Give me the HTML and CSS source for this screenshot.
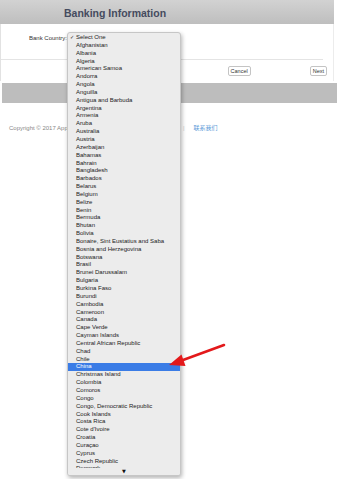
FILE: index.html
```html
<!DOCTYPE html>
<html lang="zh-CN">
<head>
    <meta charset="UTF-8">
    <title>Banking Information</title>
    <meta name="viewport" content="width=device-width, initial-scale=1.0">
    <link rel="stylesheet" href="styles.css">
</head>
<body>
    <div class="panel">
        <div class="panel-head">
            <h1>Banking Information</h1>
        </div>
        <div class="panel-body">
            <div class="field">
                <label>Bank Country:</label>
            </div>
            <div class="actions">
                <button>Cancel</button>
                <button>Next</button>
            </div>
        </div>
        <div class="panel-foot"></div>
    </div>
    <div class="footer">
        <span class="copy">Copyright © 2017 Apple</span>
        <span class="sep">|</span>
        <a class="link">联系我们</a>
    </div>

    <!-- 展开的下拉列表 -->
    <div class="dropdown">
        <ul>
            <li><span class="mark">✓</span>Select One</li>
            <li><span class="mark"></span>Afghanistan</li>
            <li><span class="mark"></span>Albania</li>
            <li><span class="mark"></span>Algeria</li>
            <li><span class="mark"></span>American Samoa</li>
            <li><span class="mark"></span>Andorra</li>
            <li><span class="mark"></span>Angola</li>
            <li><span class="mark"></span>Anguilla</li>
            <li><span class="mark"></span>Antigua and Barbuda</li>
            <li><span class="mark"></span>Argentina</li>
            <li><span class="mark"></span>Armenia</li>
            <li><span class="mark"></span>Aruba</li>
            <li><span class="mark"></span>Australia</li>
            <li><span class="mark"></span>Austria</li>
            <li><span class="mark"></span>Azerbaijan</li>
            <li><span class="mark"></span>Bahamas</li>
            <li><span class="mark"></span>Bahrain</li>
            <li><span class="mark"></span>Bangladesh</li>
            <li><span class="mark"></span>Barbados</li>
            <li><span class="mark"></span>Belarus</li>
            <li><span class="mark"></span>Belgium</li>
            <li><span class="mark"></span>Belize</li>
            <li><span class="mark"></span>Benin</li>
            <li><span class="mark"></span>Bermuda</li>
            <li><span class="mark"></span>Bhutan</li>
            <li><span class="mark"></span>Bolivia</li>
            <li><span class="mark"></span>Bonaire, Sint Eustatius and Saba</li>
            <li><span class="mark"></span>Bosnia and Herzegovina</li>
            <li><span class="mark"></span>Botswana</li>
            <li><span class="mark"></span>Brasil</li>
            <li><span class="mark"></span>Brunei Darussalam</li>
            <li><span class="mark"></span>Bulgaria</li>
            <li><span class="mark"></span>Burkina Faso</li>
            <li><span class="mark"></span>Burundi</li>
            <li><span class="mark"></span>Cambodia</li>
            <li><span class="mark"></span>Cameroon</li>
            <li><span class="mark"></span>Canada</li>
            <li><span class="mark"></span>Cape Verde</li>
            <li><span class="mark"></span>Cayman Islands</li>
            <li><span class="mark"></span>Central African Republic</li>
            <li><span class="mark"></span>Chad</li>
            <li><span class="mark"></span>Chile</li>
            <li class="active"><span class="mark"></span>China</li>
            <li><span class="mark"></span>Christmas Island</li>
            <li><span class="mark"></span>Colombia</li>
            <li><span class="mark"></span>Comoros</li>
            <li><span class="mark"></span>Congo</li>
            <li><span class="mark"></span>Congo, Democratic Republic</li>
            <li><span class="mark"></span>Cook Islands</li>
            <li><span class="mark"></span>Costa Rica</li>
            <li><span class="mark"></span>Cote d'Ivoire</li>
            <li><span class="mark"></span>Croatia</li>
            <li><span class="mark"></span>Curaçao</li>
            <li><span class="mark"></span>Cyprus</li>
            <li><span class="mark"></span>Czech Republic</li>
            <li><span class="mark"></span>Denmark</li>
        </ul>
        <div class="more">▼</div>
    </div>

    <!-- 红色标注箭头 -->
    <svg class="pointer" width="70" height="40" viewBox="0 0 70 40">
        <line x1="64" y1="9" x2="21" y2="24.8" stroke="#e3191b" stroke-width="2.6" stroke-linecap="round"/>
        <polygon points="9,29 25.5,30 21.5,18.5" fill="#e3191b"/>
    </svg>
</body>
</html>
```

FILE: styles.css
```css
body {
    margin: 0;
    background-color: #fff;
    font-family: "Liberation Sans", Arial, sans-serif;
    position: relative;
    min-height: 479px;
}
.panel {
    width: 337px;
}
.panel-head {
    height: 24px;
    background: linear-gradient(#d2d2d2, #bebebe);
    margin-right: 3px;
}
.panel-head h1 {
    margin: 0;
    padding: 7px 0 0 64px;
    font-size: 10.5px;
    line-height: 13px;
    color: #454b5e;
}
.panel-body {
    background-color: #fff;
    border-left: 1px solid #e2e2e2;
    border-right: 1px solid #ececec;
    margin-right: 3px;
}
.field {
    height: 36px;
    border-bottom: 1px solid #e4e4e4;
    margin-right: 10px;
    padding-top: 10px;
    box-sizing: border-box;
}
.field label {
    display: block;
    width: 66px;
    text-align: right;
    font-size: 6px;
    line-height: 8px;
    color: #333;
}
.actions {
    display: flex;
    justify-content: flex-end;
    gap: 59px;
    height: 21px;
    padding: 6px 6px 0 0;
    box-sizing: border-box;
}
.actions button {
    height: 10px;
    padding: 0 2px;
    font-family: "Liberation Sans", Arial, sans-serif;
    font-size: 5.5px;
    line-height: 8px;
    color: #333;
    background-color: #fff;
    border: 1px solid #c4c4c4;
    border-radius: 2px;
}
.panel-foot {
    height: 20px;
    margin: 2px 0 0 2px;
    background-color: #bdbdbd;
}
.footer {
    display: flex;
    align-items: center;
    margin-top: 21px;
    padding-left: 9px;
    font-size: 6px;
    line-height: 8px;
    color: #888;
}
.footer .copy {
    width: 172px;
    white-space: nowrap;
}
.footer .sep {
    color: #ccc;
    margin: 0 9px 0 2px;
}
.footer .link {
    color: #5a9ad8;
    font-family: "Liberation Sans", "Noto Sans CJK SC", sans-serif;
}
.dropdown {
    position: absolute;
    left: 67px;
    top: 32px;
    width: 112px;
    height: 442px;
    background-color: #ececec;
    border: 1px solid #c6c6c6;
    border-radius: 3px;
    box-shadow: 1px 2px 4px rgba(0, 0, 0, 0.3);
    overflow: hidden;
}
.dropdown ul {
    list-style: none;
    margin: 0;
    padding: 1px 0 0 0;
}
.dropdown li {
    display: flex;
    height: 7.85px;
    line-height: 7.85px;
    padding-left: 2px;
    font-size: 6px;
    color: #222;
    white-space: nowrap;
}
.dropdown li.active {
    background-color: #3a7ce6;
    color: #fff;
}
.dropdown .mark {
    width: 6px;
    font-family: "DejaVu Sans", sans-serif;
    font-size: 5px;
}
.dropdown .more {
    position: absolute;
    left: 0;
    right: 0;
    bottom: 0;
    height: 7px;
    background-color: #ececec;
    text-align: center;
    font-family: "DejaVu Sans", sans-serif;
    font-size: 5px;
    line-height: 7px;
    color: #111;
}
.pointer {
    position: absolute;
    left: 160px;
    top: 336px;
}
```
